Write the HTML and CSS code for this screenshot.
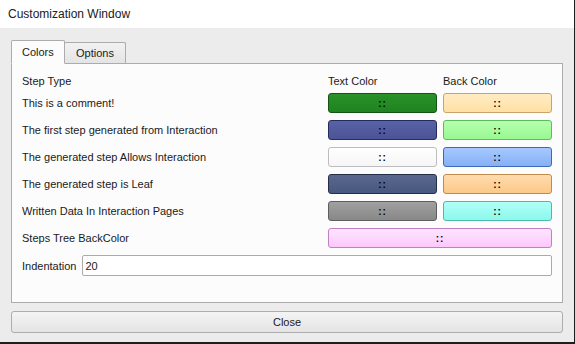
FILE: index.html
```html
<!DOCTYPE html>
<html lang="en">
<head>
  <meta charset="UTF-8">
  <title>Customization Window</title>
  <link rel="stylesheet" href="styles.css">
</head>
<body>
  <div class="window">
    <div class="titlebar">Customization Window</div>

    <div class="client">
      <!-- Tabs -->
      <div class="tabs">
        <div class="tab active">Colors</div>
        <div class="tab">Options</div>
      </div>

      <div class="panel">
        <div class="grid">
          <div class="head">Step Type</div>
          <div class="head">Text Color</div>
          <div class="head">Back Color</div>

          <div class="lbl">This is a comment!</div>
          <div class="swatch green">::</div>
          <div class="swatch moccasin">::</div>

          <div class="lbl">The first step generated from Interaction</div>
          <div class="swatch slateblue">::</div>
          <div class="swatch palegreen">::</div>

          <div class="lbl">The generated step Allows Interaction</div>
          <div class="swatch white">::</div>
          <div class="swatch skyblue">::</div>

          <div class="lbl">The generated step is Leaf</div>
          <div class="swatch navy">::</div>
          <div class="swatch peach">::</div>

          <div class="lbl">Written Data In Interaction Pages</div>
          <div class="swatch gray">::</div>
          <div class="swatch aqua">::</div>

          <div class="lbl">Steps Tree BackColor</div>
          <div class="swatch pink wide">::</div>
        </div>

        <div class="indent">
          <label>Indentation</label>
          <input type="text" value="20">
        </div>
      </div>

      <button class="close">Close</button>
    </div>
  </div>
</body>
</html>
```

FILE: styles.css
```css
html, body{
  margin:0;
  padding:0;
  background:#ececec;
}
body{
  font-family:"Liberation Sans", Arial, sans-serif;
  font-size:11px;
  color:#1a1a1a;
}
.window{
  width:574px;
  height:342px;
  border-right:1px solid #1e1e1e;
  border-bottom:2px solid #1e1e1e;
  display:flex;
  flex-direction:column;
}
.titlebar{
  height:28px;
  background:#fff;
  padding-left:8px;
  display:flex;
  align-items:center;
  font-size:12px;
  color:#202020;
}
.client{
  flex:1;
  padding:12px 11px 0 11px;
  display:flex;
  flex-direction:column;
}

/* tabs */
.tabs{
  display:flex;
  align-items:flex-end;
  height:23px;
  position:relative;
  z-index:1;
}
.tab{
  border:1px solid #acacac;
  border-bottom:none;
  border-radius:2px 2px 0 0;
  display:flex;
  align-items:center;
}
.tab.active{
  width:54px;
  height:24px;
  box-sizing:border-box;
  margin-bottom:-1px;
  padding:0 0 0 10px;
  background:#fcfcfc;
  border-bottom:1px solid #fcfcfc;
}
.tab:nth-child(2){
  width:38px;
  height:20px;
  padding:0 11px;
  margin-left:-1px;
  background:linear-gradient(#f2f2f2,#e4e4e4);
}

.panel{
  height:240px;
  box-sizing:border-box;
  border:1px solid #acacac;
  background:#fcfcfc;
  padding:8px 10px 0 10px;
}
.grid{
  display:grid;
  grid-template-columns:1fr 109px 109px;
  grid-template-rows:14px repeat(6,20px);
  column-gap:6px;
  row-gap:7px;
}
.head, .lbl{
  display:flex;
  align-items:center;
  white-space:nowrap;
}
.head{ padding-top:4px; }
.swatch{
  border:1px solid;
  border-radius:3px;
  display:flex;
  align-items:center;
  justify-content:center;
  font-size:10px;
  font-weight:bold;
  letter-spacing:1px;
  color:#000;
  box-sizing:border-box;
}
.swatch.wide{ grid-column:2 / 4; }

.green{ background:linear-gradient(#2a922a,#1f831f); border-color:#155215; }
.moccasin{ background:linear-gradient(#ffecc4,#ffe0a4); border-color:#c8a468; }
.slateblue{ background:linear-gradient(#5962a6,#4b5496); border-color:#262b5e; }
.palegreen{ background:linear-gradient(#b6ffb0,#98f890); border-color:#5bbd55; }
.white{ background:linear-gradient(#ffffff,#f6f6f6); border-color:#bdbdbd; }
.skyblue{ background:linear-gradient(#a6c8ff,#86b0f4); border-color:#3e68b8; }
.navy{ background:linear-gradient(#5a6890,#48577e); border-color:#252e48; }
.peach{ background:linear-gradient(#ffdcae,#fcc888); border-color:#c08a48; }
.gray{ background:linear-gradient(#a0a0a0,#888888); border-color:#5e5e5e; }
.aqua{ background:linear-gradient(#b0fff6,#8cf8ec); border-color:#4cb8b0; }
.pink{ background:linear-gradient(#ffe4ff,#fcc8fc); border-color:#c080c4; }

.indent{
  display:flex;
  align-items:center;
  margin-top:7px;
  gap:6px;
}
.indent input{
  flex:1;
  height:21px;
  box-sizing:border-box;
  border:1px solid #ababab;
  border-radius:2px;
  background:#fff;
  font-family:inherit;
  font-size:11px;
  padding:0 2px;
  color:#1a1a1a;
  outline:none;
}

.close{
  margin-top:8px;
  height:22px;
  border:1px solid #adadad;
  border-radius:3px;
  background:linear-gradient(#f4f4f4,#e4e4e4);
  font-family:inherit;
  font-size:11px;
  color:#1a1a1a;
}
```
